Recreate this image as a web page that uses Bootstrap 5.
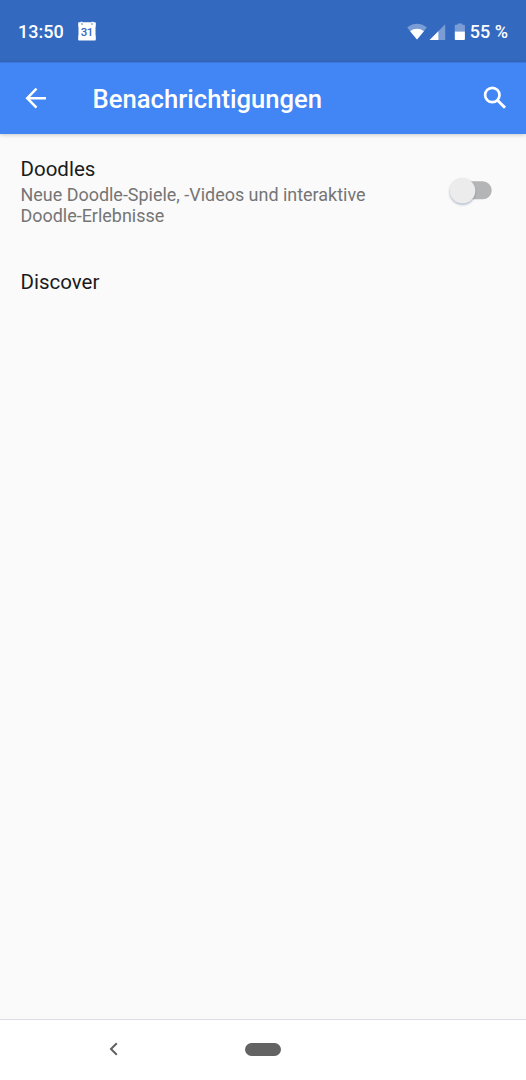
<!DOCTYPE html>
<html lang="de">
<head>
<meta charset="utf-8">
<meta name="viewport" content="width=device-width, initial-scale=1">
<title>Benachrichtigungen</title>
<link href="https://cdn.jsdelivr.net/npm/bootstrap@5.3.0/dist/css/bootstrap.min.css" rel="stylesheet">
<style>
body{font-family:Roboto,"Liberation Sans",sans-serif;background:#fafafa;color:#1b1b1b}
svg{display:block;flex:none}
.status{height:62px;background:#3469c0;font-size:18px;font-weight:500;line-height:22px;padding:1px 18px 0}
.calendar{margin:-1px 0 0 13px}
.signals{margin:-1px -1px 0 auto}
.appbar{height:72px;background:#4285f4;border-top:1px solid #3c78dc;box-shadow:0 1px 4px rgba(0,0,0,.2);padding:0 18px 0 24px}
.appbar h1{font-size:25.65px;font-weight:500;line-height:30px;margin:1px 0 0 44.5px}
.appbar svg{margin-top:-1px}
.item{padding:0 20.5px}
.item h2{font-size:20.5px;font-weight:400;line-height:24px;margin:0}
.item p{font-size:17.95px;line-height:21px;color:#757575;margin:3px 0 0;max-width:370px}
.toggle{margin:13px 0 0}
.navband{height:61px;border-top:1px solid #dcdce2;padding-bottom:2px}
.back{margin-left:108px}
.pill{width:36px;height:13px;background:#636363;margin-left:125px}
</style>
</head>
<body class="min-vh-100 d-flex flex-column">
<header>
  <div class="status d-flex align-items-center text-white">
    <span>13:50</span>
    <svg class="calendar" width="20" height="20" viewBox="0 0 20 20"><path fill="#fff" d="M2 1.300H3.600V.8h1.800v.5h9.200V.8h1.800v.5H18q.8 0 .8.800v3.200l-.3.900v7.700l.3.900v3.900q0 .8-.8.800H2q-.8 0-.8-.8v-3.900l.3-.9V6.200l-.3-.9V2.100q0-.8.800-.8z"/><g fill="#3469c0"><circle cx="5" cy="3" r=".75"/><circle cx="15" cy="3" r=".75"/></g><text x="9.700" y="15.300" text-anchor="middle" font-size="11.500" font-weight="500" fill="#3469c0" letter-spacing="-.7">31</text></svg>
    <svg class="signals" width="64" height="20" viewBox="0 0 64 20">
      <path fill="#fff" fill-opacity=".35" d="M10 18.500.2 6.500Q4.200 2.700 10 2.700T19.800 6.500z"/>
      <path fill="#fff" d="M10 18.500 3.100 10.200Q6.200 7.800 10 7.800T16.900 10.200z"/>
      <path fill="#fff" fill-opacity=".35" d="M38.200 3.200v15.700h-6.700V10z"/>
      <path fill="#fff" d="M22.500 18.900 31.500 10v8.900z"/>
      <path fill="#fff" fill-opacity=".35" d="M47.800 10.500V4.600q0-.8.8-.8h1.900V2.500h4.700v1.300h1.900q.8 0 .8.800v5.900z"/>
      <path fill="#fff" d="M47.800 10.500h10.100v7.600q0 .9-.8.900h-8.500q-.8 0-.8-.9z"/>
    </svg>
    <span>55 %</span>
  </div>
  <nav class="appbar d-flex align-items-center text-white position-relative">
    <svg width="24" height="24" viewBox="0 0 24 24" fill="none" stroke="#fff" stroke-width="2.500"><path d="M22 12.200H3.500M12.500 2.700 3.200 12.200l9.300 9.500"/></svg>
    <h1>Benachrichtigungen</h1>
    <svg class="ms-auto" width="26" height="26" viewBox="0 0 26 26" fill="none" stroke="#fff"><circle cx="10.300" cy="10" r="7.200" stroke-width="2.700"/><path stroke-width="3" d="m15.200 15 7.800 7.700"/></svg>
  </nav>
</header>
<main class="flex-grow-1">
  <section class="item d-flex justify-content-between" style="padding-top:23px">
    <div><h2>Doodles</h2><p>Neue Doodle-Spiele, -Videos und interaktive Doodle-Erlebnisse</p></div>
    <svg class="toggle" width="58" height="40" viewBox="448 170 58 40" role="switch" aria-checked="false">
      <defs><filter id="soft" x="-30%" y="-30%" width="160%" height="160%"><feGaussianBlur stdDeviation="1"/></filter></defs>
      <rect x="455" y="181.300" width="36.700" height="18" rx="9" fill="#b4b5b6"/>
      <circle cx="462.500" cy="192" r="12.800" fill="#68789c" fill-opacity=".55" filter="url(#soft)"/>
      <circle cx="462.500" cy="190.700" r="12.800" fill="#ececec"/>
    </svg>
  </section>
  <section class="item" style="padding-top:44px"><h2>Discover</h2></section>
</main>
<footer class="navband bg-white d-flex align-items-center">
  <svg class="back" width="12" height="16" viewBox="0 0 12 16" fill="none" stroke="#5f6063" stroke-width="2"><path d="M8.800 2.300 3 8l5.800 5.700"/></svg>
  <div class="pill rounded-pill"></div>
</footer>
<script src="https://cdn.jsdelivr.net/npm/bootstrap@5.3.0/dist/js/bootstrap.bundle.min.js"></script>
</body>
</html>
